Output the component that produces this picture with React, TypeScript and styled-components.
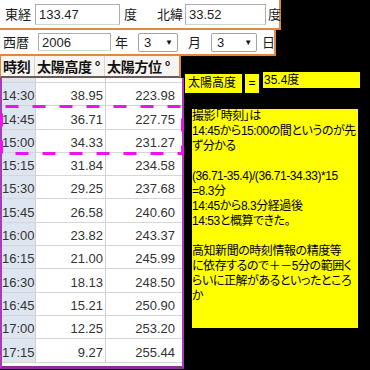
import styled, { createGlobalStyle } from "styled-components";

const ORANGE = "#e2873e";
const PURPLE = "#a93cba";
const YELLOW = "#ffff00";

const GlobalStyle = createGlobalStyle`
  html, body {
    margin: 0;
    padding: 0;
    background: #000;
  }
  body {
    font-family: "Noto Sans CJK JP", "Liberation Sans", sans-serif;
  }
`;

const rows = [
  ["14:30", "38.95", "223.98"],
  ["14:45", "36.71", "227.75"],
  ["15:00", "34.33", "231.27"],
  ["15:15", "31.84", "234.58"],
  ["15:30", "29.25", "237.68"],
  ["15:45", "26.58", "240.60"],
  ["16:00", "23.82", "243.37"],
  ["16:15", "21.00", "245.99"],
  ["16:30", "18.13", "248.50"],
  ["16:45", "15.21", "250.90"],
  ["17:00", "12.25", "253.20"],
  ["17:15", "9.27", "255.44"],
];

const memo = `撮影「時刻」は
14:45から15:00の間というのが先
ず分かる

(36.71-35.4)/(36.71-34.33)*15
=8.3分
14:45から8.3分経過後
14:53と概算できた。

高知新聞の時刻情報の精度等
に依存するので＋－5分の範囲く
らいに正解があるといったところ
か`;

const App = () => {
  return (
    <>
      <GlobalStyle />
      <Page>
        <FormRow $width={281} $height={30} $pl={5}>
          <Label>東経</Label>
          <Field $w={85} $h={21} $ml={4}>
            133.47
          </Field>
          <Label $ml={4}>度</Label>
          <Label $ml={20}>北緯</Label>
          <Field $w={81} $h={21} $ml={2}>
            33.52
          </Field>
          <Label $ml={2}>度</Label>
        </FormRow>
        <FormRow $width={276} $height={26} $pl={3}>
          <Label>西暦</Label>
          <Field $w={73} $h={18} $ml={9}>
            2006
          </Field>
          <Label $ml={4}>年</Label>
          <Select $w={40} $ml={10}>
            3<Arrow>▼</Arrow>
          </Select>
          <Label $ml={10}>月</Label>
          <Select $w={46} $ml={10}>
            3<Arrow>▼</Arrow>
          </Select>
          <Label $ml={5}>日</Label>
        </FormRow>
        <Lower>
          <TableWrap>
            <Header>
              <HeadCell>時刻</HeadCell>
              <HeadCell>太陽高度 °</HeadCell>
              <HeadCell $last>太陽方位 °</HeadCell>
            </Header>
            <Body>
              <Row $h={5}>
                <TimeCell />
                <NumCell />
                <NumCell $pr={5} />
              </Row>
              {rows.map(([t, alt, az]) => (
                <Row key={t} $h={23.3}>
                  <TimeCell>{t}</TimeCell>
                  <NumCell>{alt}</NumCell>
                  <NumCell $pr={5}>{az}</NumCell>
                </Row>
              ))}
            </Body>
            <Marquee width="185" height="51">
              <rect
                x="1.5"
                y="1.5"
                width="181"
                height="47"
                fill="none"
                stroke="#ee12ee"
                strokeWidth="3"
                strokeDasharray="13 14"
                strokeDashoffset="-4"
              />
            </Marquee>
          </TableWrap>
          <Notes>
            <ResultRow>
              <Tag $w={57}>太陽高度</Tag>
              <Tag $w={14} $ml={3} $center>
                =
              </Tag>
              <ValueBox>35.4度</ValueBox>
            </ResultRow>
            <Memo>{memo}</Memo>
          </Notes>
        </Lower>
      </Page>
    </>
  );
};

export default App;

const Page = styled.div`
  width: 370px;
  height: 370px;
  overflow: hidden;
  background: #000;
`;

const FormRow = styled.div<{ $width: number; $height: number; $pl: number }>`
  display: flex;
  align-items: center;
  box-sizing: border-box;
  width: ${(p) => p.$width}px;
  height: ${(p) => p.$height}px;
  padding-left: ${(p) => p.$pl}px;
  background: #fff;
  border-right: 2px solid ${ORANGE};
  border-bottom: 2px solid ${ORANGE};
  white-space: nowrap;
`;

const Label = styled.span<{ $ml?: number }>`
  margin-left: ${(p) => p.$ml ?? 0}px;
  font-size: 13px;
  line-height: 16px;
  color: #1c1c1c;
  flex-shrink: 0;
`;

const Field = styled.div<{ $w: number; $h: number; $ml: number }>`
  box-sizing: border-box;
  flex-shrink: 0;
  width: ${(p) => p.$w}px;
  height: ${(p) => p.$h}px;
  margin-left: ${(p) => p.$ml}px;
  padding-left: 3px;
  display: flex;
  align-items: center;
  border: 1px solid #abadb3;
  border-bottom-color: #c9dcc9;
  background: #fff;
  font-family: "Liberation Sans", Arial, sans-serif;
  font-size: 13px;
  color: #222;
`;

const Select = styled.div<{ $w: number; $ml: number }>`
  box-sizing: border-box;
  flex-shrink: 0;
  width: ${(p) => p.$w}px;
  height: 19px;
  margin-left: ${(p) => p.$ml}px;
  padding: 0 4px 0 5px;
  display: flex;
  align-items: center;
  justify-content: space-between;
  border: 1px solid #a3a3a3;
  border-radius: 2px;
  background: #fff;
  font-family: "Liberation Sans", Arial, sans-serif;
  font-size: 13px;
  color: #222;
`;

const Arrow = styled.span`
  font-size: 8px;
  color: #111;
`;

const Lower = styled.div`
  display: flex;
  align-items: flex-start;
`;

const TableWrap = styled.div`
  position: relative;
  width: 184px;
  flex-shrink: 0;
  font-family: "Liberation Sans", Arial, sans-serif;
`;

const Header = styled.div`
  display: grid;
  grid-template-columns: 34px 70px 74px;
  box-sizing: border-box;
  width: 181px;
  height: 22px;
  background: #f7f5f2;
  border-left: 1px solid ${ORANGE};
  border-right: 2px solid ${ORANGE};
  border-bottom: 2px solid #6a5a5a;
`;

const HeadCell = styled.div<{ $last?: boolean }>`
  padding-left: 2px;
  font-family: "Noto Sans CJK JP", sans-serif;
  font-weight: bold;
  font-size: 14px;
  line-height: 20px;
  letter-spacing: -0.3px;
  color: #111;
  white-space: pre;
  overflow: hidden;
  border-right: ${(p) => (p.$last ? "none" : "1px solid #d9d4cf")};
`;

const Body = styled.div`
  box-sizing: border-box;
  width: 184px;
  padding-bottom: 3px;
  background: #fff;
  border-left: 2px solid ${PURPLE};
  border-right: 2px solid ${PURPLE};
  border-bottom: 3px solid #8a2c9a;
`;

const Row = styled.div<{ $h: number }>`
  display: grid;
  grid-template-columns: 33px 70px 75px;
  box-sizing: border-box;
  height: ${(p) => p.$h}px;
  border-bottom: 1px solid #d6d6d6;
`;

const TimeCell = styled.div`
  display: flex;
  align-items: flex-end;
  padding-bottom: 2px;
  background: #dde5f1;
  font-size: 13px;
  line-height: 15px;
  color: #333;
`;

const NumCell = styled.div<{ $pr?: number }>`
  display: flex;
  align-items: flex-end;
  justify-content: flex-end;
  padding: 0 ${(p) => p.$pr ?? 2}px 2px 0;
  border-left: 1px solid #d0d0d0;
  font-size: 13px;
  line-height: 15px;
  color: #333;
`;

const Marquee = styled.svg`
  position: absolute;
  left: 0;
  top: 49px;
  pointer-events: none;
`;

const Notes = styled.div`
  margin-left: 1px;
  padding-top: 16px;
  font-family: "Liberation Sans", "Noto Sans CJK JP", sans-serif;
  font-feature-settings: "palt";
  color: #000;
`;

const ResultRow = styled.div`
  display: flex;
  align-items: flex-start;
`;

const Tag = styled.div<{ $w: number; $ml?: number; $center?: boolean }>`
  box-sizing: border-box;
  width: ${(p) => p.$w}px;
  height: 19px;
  margin-top: 2px;
  margin-left: ${(p) => p.$ml ?? 0}px;
  padding-left: ${(p) => (p.$center ? 0 : 3)}px;
  text-align: ${(p) => (p.$center ? "center" : "left")};
  background: ${YELLOW};
  font-size: 12px;
  line-height: 19px;
  white-space: nowrap;
`;

const ValueBox = styled.div`
  box-sizing: border-box;
  width: 97px;
  height: 16px;
  margin-left: 4px;
  padding-left: 1px;
  background: ${YELLOW};
  font-size: 12px;
  line-height: 16px;
`;

const Memo = styled.div`
  width: 166px;
  height: 219px;
  margin-top: 16px;
  margin-left: 7px;
  background: ${YELLOW};
  font-size: 12px;
  line-height: 15px;
  letter-spacing: -0.45px;
  white-space: pre;
`;
